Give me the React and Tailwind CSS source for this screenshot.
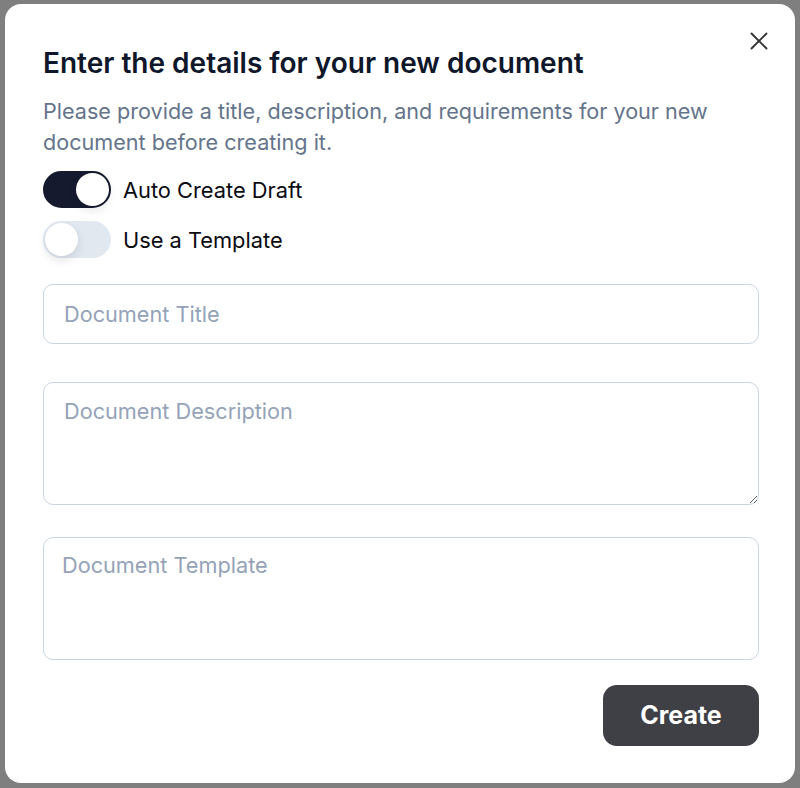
import { useState } from "react";

// Modal: new document details, shown over a dimmed page.

function Toggle({ on, onChange, label }) {
  return (
    <label className="flex items-center gap-3 cursor-pointer select-none">
      <button
        type="button"
        onClick={() => onChange(!on)}
        className={`relative h-[37px] w-[68px] shrink-0 rounded-full border-2 transition ${
          on ? "border-[#161a2e] bg-[#161a2e]" : "border-[#e2e8f0] bg-[#e2e8f0]"
        }`}
      >
        <span
          className={`absolute top-0 h-[33px] w-[33px] rounded-full bg-white shadow-[0_4px_10px_rgba(15,23,42,0.12)] transition ${
            on ? "left-[31px]" : "left-0"
          }`}
        />
      </button>
      <span className="text-[21.8px] leading-7 text-[#0b0b12]">{label}</span>
    </label>
  );
}

export default function App() {
  const [draft, setDraft] = useState(true);
  const [template, setTemplate] = useState(false);

  return (
    <div
      className="h-[788px] w-[800px] bg-[#7f7f7f] pl-[5px] pt-[4px]"
      style={{ fontFamily: "Inter, 'Noto Sans', sans-serif" }}
    >
      <div className="relative flex h-[779px] w-[790px] flex-col rounded-2xl bg-white pl-[38px] pr-[36px] pt-[41px]">
        <button type="button" className="absolute right-[21px] top-[22px] text-[#333]">
          <svg width="30" height="30" viewBox="0 0 24 24" fill="none" stroke="currentColor" strokeWidth="1.5" strokeLinecap="round">
            <path d="M18 6 6 18" />
            <path d="m6 6 12 12" />
          </svg>
        </button>

        <h2 className="text-[28px] font-semibold leading-9 text-[#0f172a]">
          Enter the details for your new document
        </h2>
        <p className="mt-[15px] text-[21.6px] leading-[31px] text-[#64748b]">
          Please provide a title, description, and requirements for your new document before creating it.
        </p>

        <div className="mt-[13px] flex flex-col gap-[13px]">
          <Toggle on={draft} onChange={setDraft} label="Auto Create Draft" />
          <Toggle on={template} onChange={setTemplate} label="Use a Template" />
        </div>

        <input
          placeholder="Document Title"
          className="mt-[26px] h-[60px] w-full rounded-[10px] border border-[#cbd5e1] px-5 text-[21.7px] text-[#0f172a] outline-none placeholder:text-[#94a3b8]"
        />
        <textarea
          placeholder="Document Description"
          className="mt-[38px] h-[123px] w-full rounded-[10px] border border-[#cbd5e1] px-5 pt-[14px] text-[21.7px] leading-7 text-[#0f172a] outline-none placeholder:text-[#94a3b8]"
        />
        <textarea
          placeholder="Document Template"
          className="mt-[32px] h-[123px] w-full resize-none rounded-[10px] border border-[#cbd5e1] px-[18px] pt-[13px] text-[21.7px] leading-7 text-[#0f172a] outline-none placeholder:text-[#94a3b8]"
        />

        <div className="mt-[25px] flex justify-end">
          <button
            type="button"
            className="h-[61px] w-[156px] rounded-[14px] bg-[#3f3f46] text-[25px] font-bold text-white"
          >
            Create
          </button>
        </div>
      </div>
    </div>
  );
}
